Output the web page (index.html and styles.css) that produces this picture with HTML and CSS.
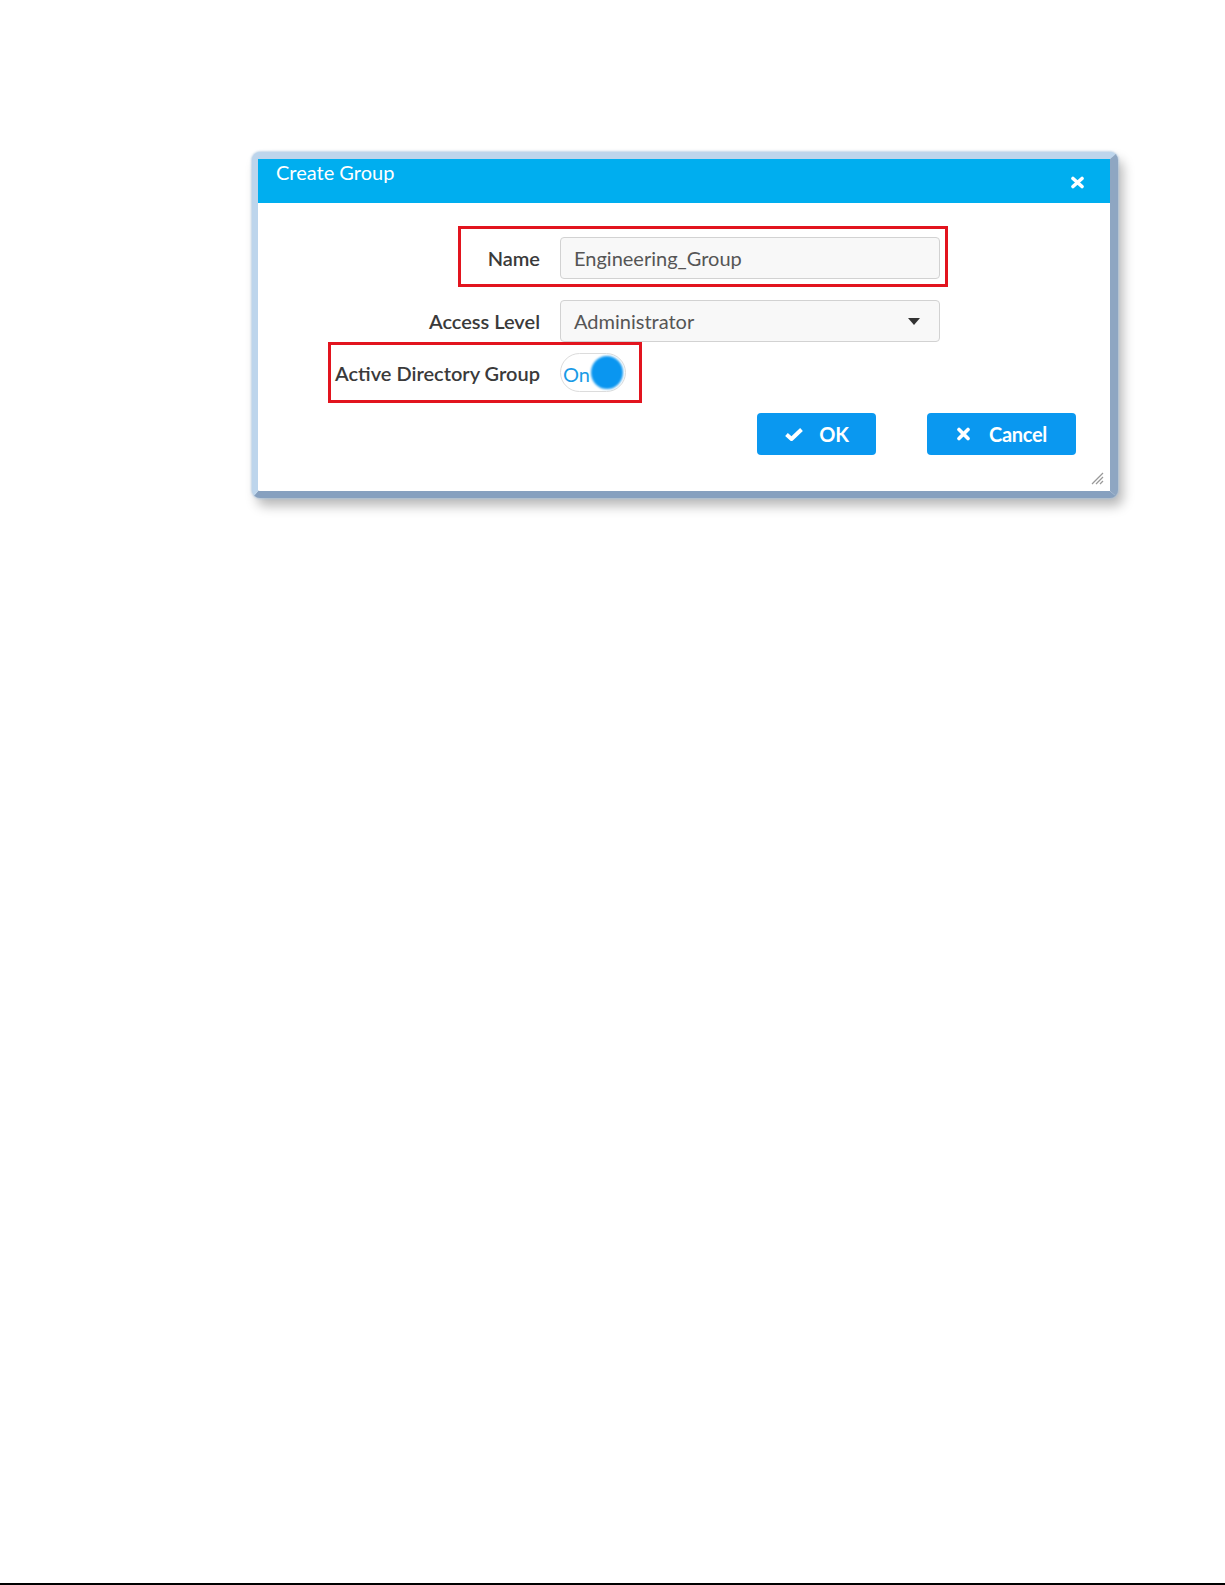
FILE: index.html
```html
<!DOCTYPE html>
<html lang="en">
<head>
    <meta charset="UTF-8">
    <meta name="viewport" content="width=device-width, initial-scale=1.0">
    <title>Create Group</title>
    <link rel="stylesheet" href="styles.css">
</head>
<body>
    <main class="page">
        <!-- Create Group dialog -->
        <section class="dialog">
            <header class="dialog-header">
                <h1 class="dialog-title">Create Group</h1>
                <button class="dialog-close" type="button" aria-label="Close">
                    <svg width="15" height="13" viewBox="0 0 15 13">
                        <path d="M3 2.5 L12 10.5 M12 2.5 L3 10.5" stroke="#fff" stroke-width="3.6" stroke-linecap="round"/>
                    </svg>
                </button>
            </header>
            <form class="dialog-body">
                <div class="field-row mark-name">
                    <label class="field-label" for="groupName">Name</label>
                    <input class="field-input" type="text" id="groupName" value="Engineering_Group">
                </div>

                <div class="field-row field-row-select">
                    <label class="field-label">Access Level</label>
                    <div class="field-input field-select">
                        <span>Administrator</span>
                        <svg width="12" height="7" viewBox="0 0 12 7">
                            <path d="M0 0 H12 L6 7 Z" fill="#333"/>
                        </svg>
                    </div>
                </div>

                <div class="field-row field-row-toggle mark-ad">
                    <label class="field-label">Active Directory Group</label>
                    <div class="toggle">
                        <span class="toggle-text">On</span>
                        <span class="toggle-knob"></span>
                    </div>
                </div>

                <div class="dialog-actions">
                    <button class="btn btn-ok" type="button">
                        <svg width="20" height="15" viewBox="0 0 20 15">
                            <path d="M2.5 7.5 L7.5 12 L17.5 2.5" fill="none" stroke="#fff" stroke-width="4" stroke-linejoin="round"/>
                        </svg>
                        <span>OK</span>
                    </button>
                    <button class="btn btn-cancel" type="button">
                        <svg width="15" height="14" viewBox="0 0 15 14">
                            <path d="M3 2.5 L12 11.5 M12 2.5 L3 11.5" stroke="#fff" stroke-width="3.6" stroke-linecap="round"/>
                        </svg>
                        <span>Cancel</span>
                    </button>
                </div>

                <svg class="resize-grip" width="14" height="13" viewBox="0 0 14 13">
                    <path d="M1 12 L12 1 M5 12 L12 5 M9 12 L12 9" stroke="#999" stroke-width="1.3"/>
                </svg>
            </form>
        </section>
    </main>
    <div class="page-rule"></div>
</body>
</html>
```

FILE: styles.css
```css
/* General Styles */
html, body {
    margin: 0;
    padding: 0;
}

body {
    font-family: Lato, "Open Sans", sans-serif;
    background: #fff;
    min-height: 1585px;
    display: flex;
    flex-direction: column;
}

.page {
    flex: 1;
    padding: 152px 0 0 252px;
}

/* Dialog frame */
.dialog {
    width: 852px;
    border-style: solid;
    border-width: 7px 8px 7px 6px;
    border-color: #bdd5ec #8ea6c2 #86a0bf #bdd5ec;
    border-radius: 8px;
    box-shadow: 0 0 2px 1px rgba(160, 190, 220, 0.6), 5px 8px 12px rgba(0, 0, 0, 0.28);
    background: #fff;
}

.dialog-header {
    height: 44px;
    background: #00aeef;
    display: flex;
    justify-content: space-between;
    padding: 0 25px 0 18px;
}

.dialog-title {
    margin: 0;
    padding-top: 1px;
    font-size: 20px;
    font-weight: 400;
    line-height: 24px;
    color: #fff;
}

.dialog-close {
    background: none;
    border: none;
    padding: 0;
    margin-top: 17px;
    width: 15px;
    height: 13px;
    display: flex;
    cursor: pointer;
}

/* Form */
.dialog-body {
    position: relative;
    padding: 34px 34px 36px 20px;
    display: flex;
    flex-direction: column;
    align-items: flex-start;
}

.field-row {
    position: relative;
    display: flex;
    align-items: center;
    gap: 20px;
}

.field-row-select {
    margin-top: 21px;
}

.field-row-toggle {
    margin-top: 11px;
}

.field-label {
    width: 262px;
    text-align: right;
    font-size: 20px;
    font-weight: 600;
    color: #3a3a3a;
}

.field-input {
    box-sizing: border-box;
    width: 380px;
    height: 42px;
    margin: 0;
    padding: 0 13px;
    border: 1px solid #d2d2d2;
    border-radius: 4px;
    background: #f8f8f8;
    font-family: Lato, "Open Sans", sans-serif;
    font-size: 20px;
    color: #555;
}

.field-select {
    display: flex;
    align-items: center;
    justify-content: space-between;
    padding-right: 19px;
}

/* Annotation boxes */
.mark-name::after,
.mark-ad::after {
    content: "";
    position: absolute;
    border: 3px solid #e2141e;
}

.mark-name::after {
    left: 180px;
    right: -8px;
    top: -11px;
    bottom: -8px;
}

.mark-ad::after {
    left: 50px;
    right: -16px;
    top: -11px;
    bottom: -11px;
}

/* Toggle */
.toggle {
    box-sizing: border-box;
    width: 66px;
    height: 39px;
    border: 1px solid #dcdcdc;
    border-radius: 20px;
    background: #fff;
    display: flex;
    align-items: center;
    padding: 0 2px 0 2px;
}

.toggle-text {
    font-size: 20px;
    color: #1a9be6;
    padding-top: 3px;
}

.toggle-knob {
    width: 32px;
    height: 33px;
    margin-left: auto;
    border-radius: 50%;
    background: #0a96f0;
    filter: blur(1px);
}

/* Buttons */
.dialog-actions {
    align-self: stretch;
    display: flex;
    justify-content: flex-end;
    gap: 51px;
    margin-top: 21px;
}

.btn {
    height: 42px;
    display: flex;
    align-items: center;
    justify-content: center;
    gap: 15px;
    border: none;
    border-radius: 4px;
    background: #0a98f0;
    color: #fff;
    font-family: Lato, "Open Sans", sans-serif;
    font-size: 20px;
    font-weight: 700;
    letter-spacing: -0.3px;
    cursor: pointer;
}

.btn-ok {
    width: 119px;
}

.btn-cancel {
    width: 149px;
    gap: 18px;
}

.resize-grip {
    position: absolute;
    right: 5px;
    bottom: 6px;
}

.page-rule {
    height: 2px;
    background: #000;
}
```
